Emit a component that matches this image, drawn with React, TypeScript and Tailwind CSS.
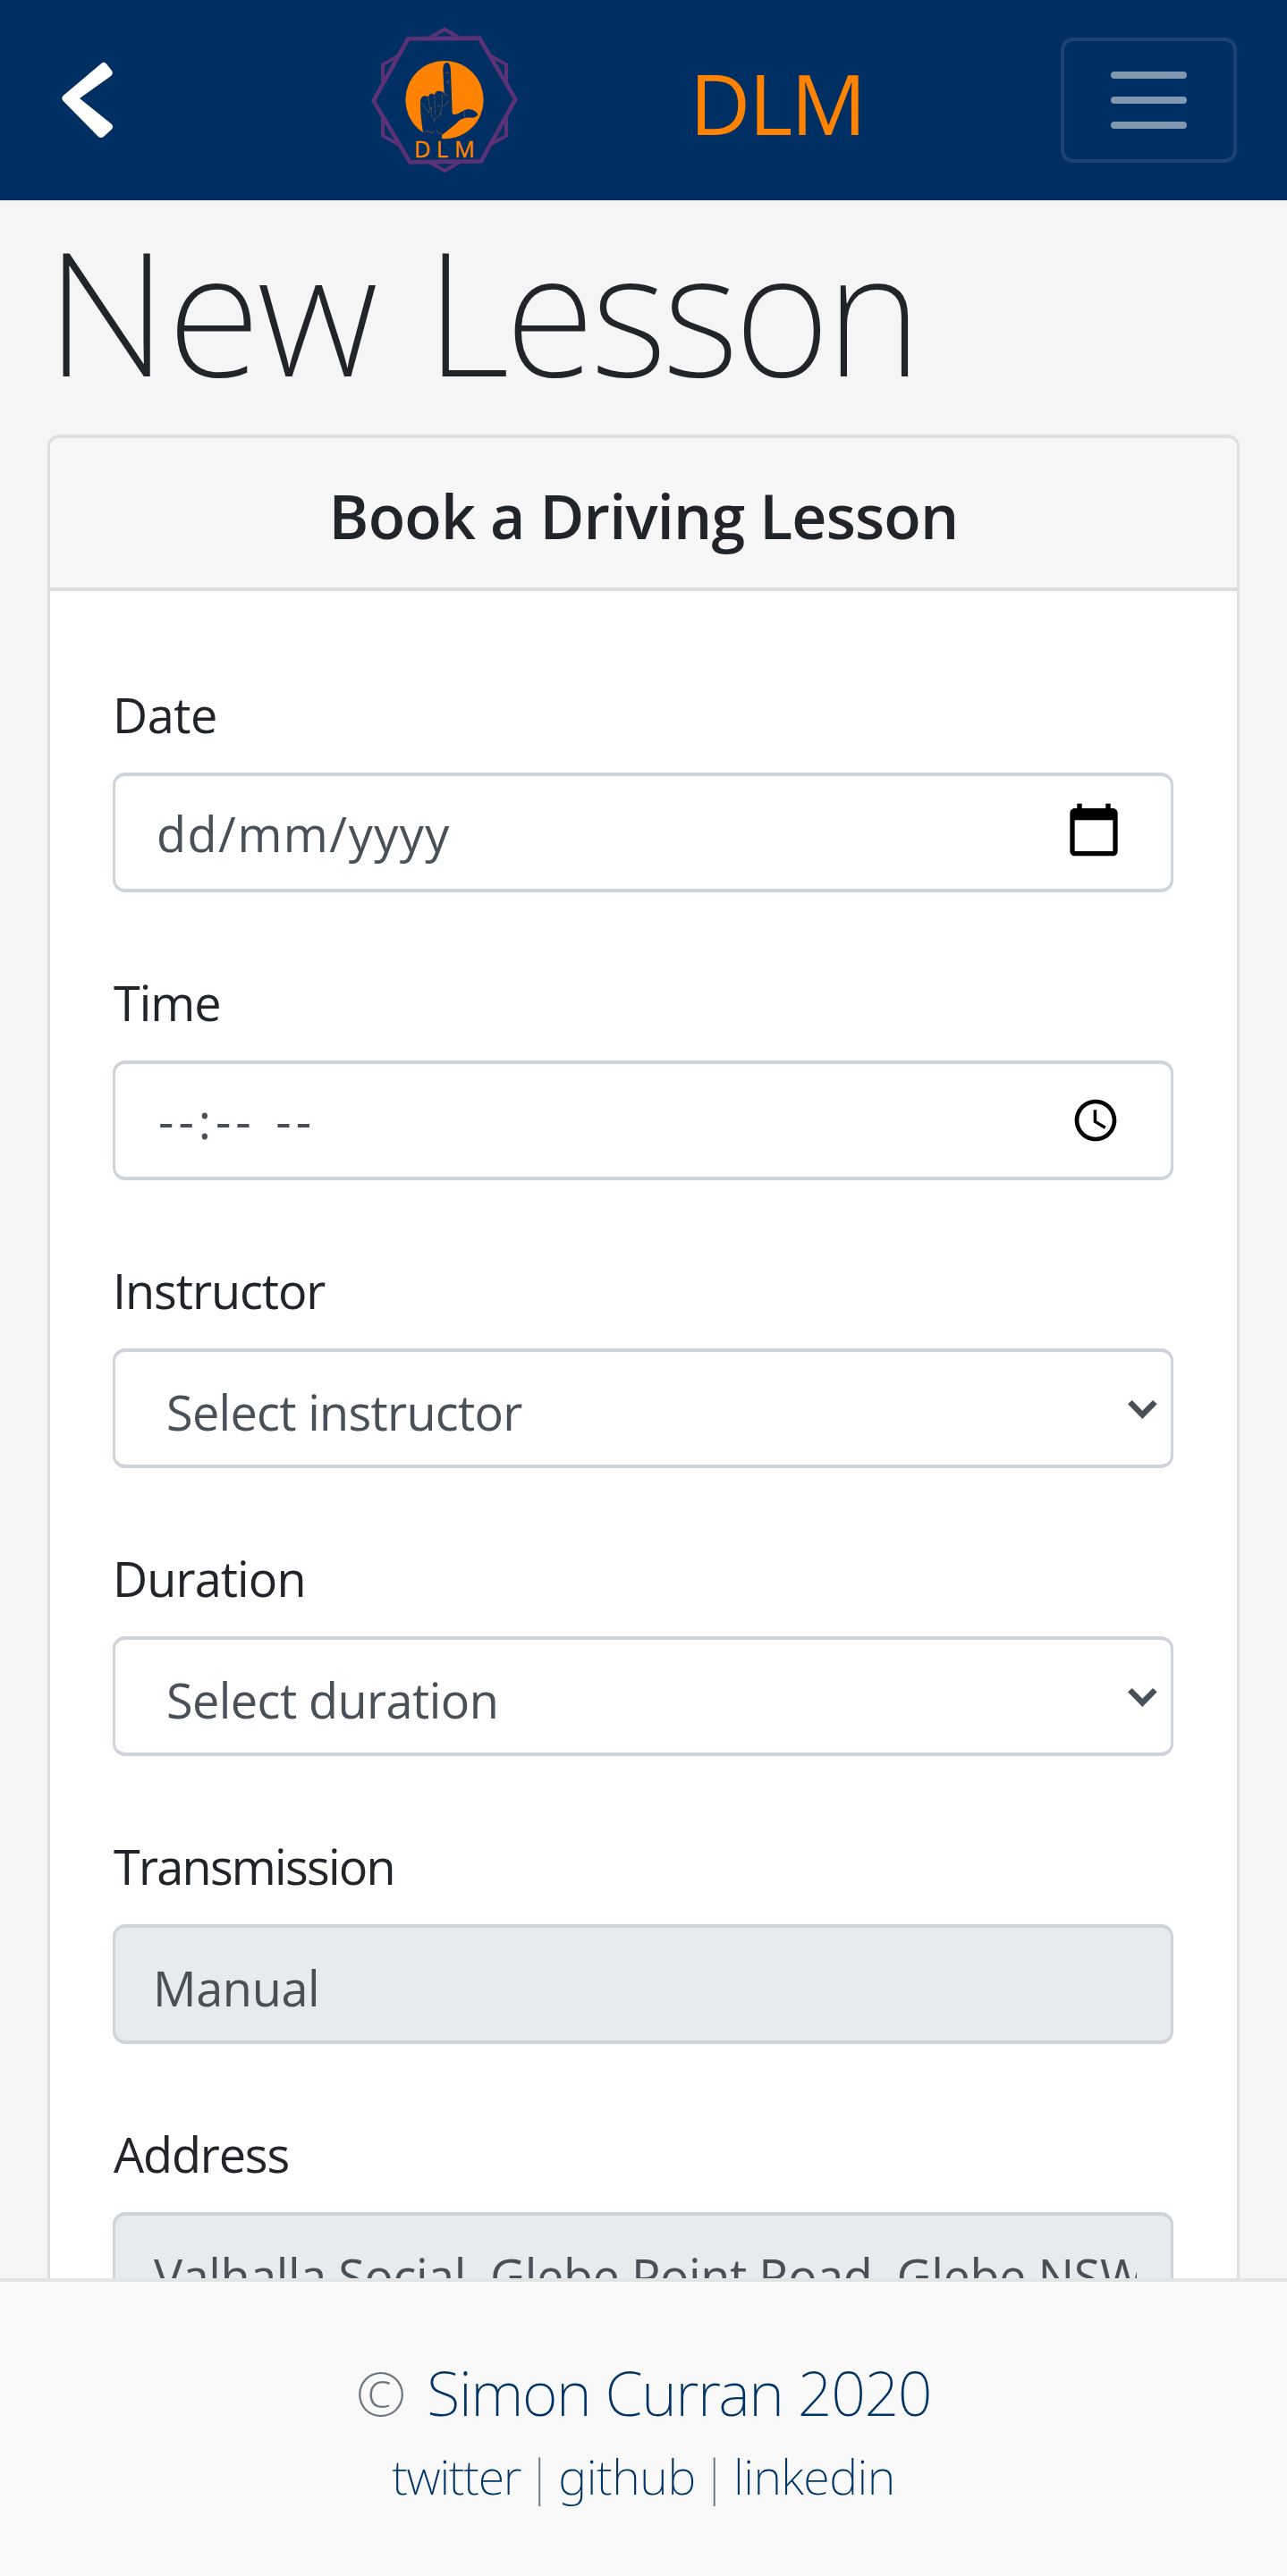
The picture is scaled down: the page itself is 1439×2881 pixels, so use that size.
import type { ReactNode } from 'react';

function BackIcon() {
  return (
    <svg className="ml-[69px] h-[86px] w-[58px] shrink-0" viewBox="0 0 58 86" fill="#ffffff">
      <path d="M1.6 38 L44 2.2 Q47.5 -0.6 50 2.4 L55.6 9.6 Q58.4 13 55 16 L20 41 L55.4 69.6 Q58.4 72.4 56 75.4 L47 83.8 Q43.4 86.6 40.6 83.4 L1.8 44 Q-1 41 1.6 38 Z" />
    </svg>
  );
}

function Logo() {
  return (
    <svg className="ml-[287px] h-[166px] w-[166px] shrink-0" viewBox="42 27 498 498">
      <polygon points="291,38 498,157 498,395 291,513 84,395 84,157" fill="none" stroke="#5c3277" strokeWidth="12" />
      <polygon points="169,70 408,68 529,273 414,481 175,484 53,278" fill="#002f63" stroke="#5c3277" strokeWidth="14" />
      <circle cx="291" cy="275" r="131" fill="#ff8200" />
      <path
        d="M299 150 C290 150 286 160 286 176 L290 254 C287 248 281 245 272 245 C263 245 259 250 258 259 C252 252 239 252 237 265 C228 258 210 262 210 280 C210 315 213 350 219 385 L205 409 L282 409 L282 394 L330 355 C344 338 358 334 385 335 C393 334 400 330 403 325 C400 315 385 306 370 306 C354 308 345 321 326 324 C320 325 318 322 317 318 L312 180 C312 160 307 150 299 150 Z"
        fill="#002f63"
      />
      <g fill="none" stroke="#a8642a" strokeWidth="1.8">
        <path d="M292 184 L306 184 M298 211 L307 211 M298 217 L306 217" />
        <path d="M237 266 L241 300 L248 310 M258 262 L260 325 M283 258 L283 300 L276 328" strokeDasharray="12 3" />
        <path d="M213 283 L225 300 L238 318 L243 303 M248 298 Q243 335 258 338 Q274 334 276 318" strokeDasharray="10 3" />
        <path d="M288 256 L304 260 M288 295 Q300 292 304 278 M258 338 L256 352 M268 295 L276 296" />
        <path d="M222 384 L232 380 L252 386 L256 380 M264 376 L272 386 L284 390 M357 311 Q353 322 359 333" />
      </g>
      <text y="467" x="189 263 324" fill="#ff8200" stroke="#ff8200" strokeWidth="1.2" fontSize="76" className="font-['Open_Sans'] font-normal">
        DLM
      </text>
    </svg>
  );
}

function MenuButton() {
  return (
    <button className="mr-14 ml-auto flex h-[140px] w-[197px] flex-col items-center justify-center gap-5 rounded-[14px] border-4 border-white/10">
      <span className="h-2 w-[85px] rounded-full bg-white/50" />
      <span className="h-2 w-[85px] rounded-full bg-white/50" />
      <span className="h-2 w-[85px] rounded-full bg-white/50" />
    </button>
  );
}

function CalendarIcon() {
  return (
    <svg className="mt-[28px] mr-[54px] ml-auto h-[64px] w-[64px] shrink-0" viewBox="0 0 24 24" fill="#000000">
      <path d="M20 3h-1V1h-2v2H7V1H5v2H4c-1.1 0-2 .9-2 2v16c0 1.1.9 2 2 2h16c1.1 0 2-.9 2-2V5c0-1.1-.9-2-2-2zm0 18H4V8h16v13z" />
    </svg>
  );
}

function ClockIcon() {
  return (
    <svg className="mt-[35px] mr-[56px] ml-auto h-14 w-14 shrink-0" viewBox="0 0 24 24" fill="#000000">
      <path d="M11.99 2C6.47 2 2 6.48 2 12s4.47 10 9.99 10C17.52 22 22 17.52 22 12S17.52 2 11.99 2zM12 20c-4.42 0-8-3.58-8-8s3.58-8 8-8 8 3.58 8 8-3.58 8-8 8z" />
      <path d="M12.5 7H11v6l5.25 3.15.75-1.23-4.5-2.67z" />
    </svg>
  );
}

function SelectArrow() {
  return (
    <svg className="mt-[54px] mr-[15px] ml-auto h-[21px] w-[33px] shrink-0" viewBox="0 0 33 21" fill="#495057">
      <polygon points="0,4.3 4.7,0 16.3,11.7 28,0 32.7,4.3 16.3,21" />
    </svg>
  );
}

function Field({ label, labelClass, disabled, children }: { label: string; labelClass: string; disabled?: boolean; children: ReactNode }) {
  return (
    <div className="flex h-[322px] shrink-0 flex-col">
      <label className={`mb-[23px] h-[84px] leading-[84px] text-[#212529] ${labelClass}`}>{label}</label>
      <div
        className={`flex h-[134px] items-start rounded-[14px] border-x-[3px] border-y-4 border-[#ced4da] leading-[84px] text-[#495057] ${
          disabled ? 'bg-[#e8ebee]' : 'bg-white'
        }`}
      >
        {children}
      </div>
    </div>
  );
}

export default function App() {
  return (
    <div className="flex h-[2881px] flex-col overflow-hidden bg-[#f5f5f5] font-['Open_Sans',sans-serif] text-[54px]">
      <nav className="flex h-56 shrink-0 items-center bg-[#002f63]">
        <BackIcon />
        <Logo />
        <span className="mt-[6px] ml-[191px] text-[94px] leading-[120px] tracking-[-2px] text-[#ff8200]">DLM</span>
        <MenuButton />
      </nav>

      <main className="flex min-h-0 flex-1 flex-col px-[53px] pt-[5px]">
        <h1 className="-ml-0.5 flex shrink-0 font-['Noto_Sans',sans-serif] text-[192px] leading-[235px] font-extralight text-[#212529]">
          <span className="w-[425px] tracking-[-0.5px]">New</span>{' '}
          <span className="origin-left scale-x-[0.956] tracking-[-4.7px]">Lesson</span>
        </h1>
        <section className="mt-[22px] flex shrink-0 flex-col rounded-[14px] border-x-[3px] border-y-4 border-[#dfdfdf] bg-white">
          <h2 className="h-[171px] rounded-t-[11px] border-b-4 border-[#dbdbdb] bg-[#f7f7f7] pt-[45px] text-center text-[68px] leading-[84px] font-semibold tracking-[-0.8px] text-[#212529]">
            Book a Driving Lesson
          </h2>
          <form className="flex flex-col pt-24 pr-[71px] pl-[70px]">
            <Field label="Date" labelClass="tracking-[-0.45px]">
              <span className="mt-[22px] ml-[46px] tracking-[1.5px]">dd/mm/yyyy</span>
              <CalendarIcon />
            </Field>
            <Field label="Time" labelClass="pl-px tracking-[-1px]">
              <span className="mt-[21px] ml-12 tracking-[5px] [word-spacing:3.6px]">--:-- --</span>
              <ClockIcon />
            </Field>
            <Field label="Instructor" labelClass="tracking-[-1.07px]">
              <span className="mt-[25px] ml-[57px] tracking-[-0.7px]">Select instructor</span>
              <SelectArrow />
            </Field>
            <Field label="Duration" labelClass="tracking-[-0.9px]">
              <span className="mt-[25px] ml-[57px] tracking-[-0.57px]">Select duration</span>
              <SelectArrow />
            </Field>
            <Field label="Transmission" labelClass="pl-px tracking-[-1.76px]" disabled>
              <span className="mt-[25px] ml-[42px] tracking-[-0.35px]">Manual</span>
            </Field>
            <Field label="Address" labelClass="pl-px tracking-[-1.15px]" disabled>
              <span className="mr-[38px] ml-[43px] mt-[25px] overflow-hidden tracking-[-0.44px] whitespace-nowrap">
                Valhalla Social, Glebe Point Road, Glebe NSW
              </span>
            </Field>
          </form>
        </section>
      </main>

      <footer className="relative z-10 flex h-[333px] shrink-0 flex-col items-center border-t-4 border-[#e4e4e4] bg-[#f9f9f9] pt-[74px] font-['Noto_Sans',sans-serif] font-extralight text-[#6c757d]">
        <p className="flex gap-[23px] text-[68px] leading-[100px]">
          <span>©</span>
          <a className="tracking-[-1.4px] text-[#003366]">Simon Curran 2020</a>
        </p>
        <p className="mt-px flex gap-[6.5px] leading-[84px]">
          <a className="tracking-[-1.3px] text-[#003366]">twitter</a>
          <span>|</span>
          <a className="tracking-[-0.4px] text-[#003366]">github</a>
          <span>|</span>
          <a className="tracking-[-0.47px] text-[#003366]">linkedin</a>
        </p>
      </footer>
    </div>
  );
}
